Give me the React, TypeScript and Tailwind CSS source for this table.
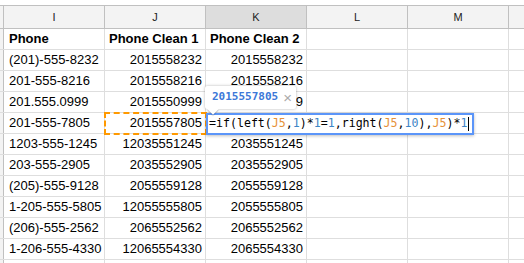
const colI = ["Phone", "(201)-555-8232", "201-555-8216", "201.555.0999", "201-555-7805", "1203-555-1245", "203-555-2905", "(205)-555-9128", "1-205-555-5805", "(206)-555-2562", "1-206-555-4330", ""];
const colJ = ["Phone Clean 1", "2015558232", "2015558216", "2015550999", "2015557805", "12035551245", "2035552905", "2055559128", "12055555805", "2065552562", "12065554330", ""];
// K5 sits under the formula editor, so it is left blank
const colK = ["Phone Clean 2", "2015558232", "2015558216", "2015550999", "", "2035551245", "2035552905", "2055559128", "2055555805", "2065552562", "2065554330", ""];

const headers = ["I", "J", "K", "L", "M"];

function Formula() {
    const ref = "text-[#e69138]";
    const num = "text-[#3d85c6]";
    return (
        <span>
            =if(left(<span className={ref}>J5</span>,<span className={num}>1</span>)*<span className={num}>1</span>=
            <span className={num}>1</span>,right(<span className={ref}>J5</span>,<span className={num}>10</span>),
            <span className={ref}>J5</span>)*<span className={num}>1</span>
        </span>
    );
}

function App() {
    return (
        <div className="relative w-[524px] h-[263px] overflow-hidden bg-white text-black" style={{ fontFamily: '"Liberation Sans", Arial, sans-serif' }}>
            <div className="h-[5px]" />
            {/* column header */}
            <div className="flex h-[24px] border-y border-[#c0c0c0] bg-[#f3f3f3]">
                <div className="w-[4px] shrink-0 border-r border-[#c0c0c0]" />
                {headers.map((h) => (
                    <div
                        key={h}
                        className={
                            "w-[101px] shrink-0 flex items-center justify-center border-r border-[#c0c0c0] text-[11px] text-[#222] " +
                            (h === "K" ? "bg-[#dddddd]" : "")
                        }
                    >
                        {h}
                    </div>
                ))}
                <div className="flex-1" />
            </div>
            {colI.map((v, i) => (
                <div key={i} className="flex h-[21px] border-b border-[#dedede] text-[13px] leading-[20px]">
                    <div className="w-[4px] shrink-0 border-r border-[#c0c0c0] bg-[#f3f3f3]" />
                    <div className={"w-[101px] shrink-0 border-r border-[#dedede] pl-[5px] whitespace-nowrap " + (i === 0 ? "font-bold" : "")}>{v}</div>
                    <div className={"w-[101px] shrink-0 border-r border-[#dedede] whitespace-nowrap " + (i === 0 ? "font-bold pl-[4px]" : "text-right pr-[3px]")}>{colJ[i]}</div>
                    <div className={"w-[101px] shrink-0 border-r border-[#dedede] whitespace-nowrap " + (i === 0 ? "font-bold pl-[4px]" : "text-right pr-[3px]")}>{colK[i]}</div>
                    <div className="w-[101px] shrink-0 border-r border-[#dedede]" />
                    <div className="w-[101px] shrink-0 border-r border-[#dedede]" />
                    <div className="flex-1" />
                </div>
            ))}

            {/* copied cell marker */}
            <div className="absolute left-[104px] top-[112px] w-[103px] h-[23px] border-2 border-dashed border-[#ff9900]" />

            {/* formula editor */}
            <div
                className="absolute left-[206px] top-[113px] w-[268px] h-[22px] border-2 border-[#5b95f9] bg-white pl-[1px] flex items-center text-[11.6px] whitespace-nowrap shadow-[0_1px_3px_rgba(0,0,0,0.25)]"
                style={{ fontFamily: '"DejaVu Sans Mono", "Liberation Mono", monospace' }}
            >
                <Formula />
                <span className="ml-[1px] inline-block w-[1px] h-[14px] bg-black" />
            </div>

            {/* tooltip */}
            <div className="absolute left-[205px] top-[86px] w-[91px] h-[23px] bg-white rounded-[2px] shadow-[0_0_3px_rgba(0,0,0,0.3)] flex items-center pl-[7px] gap-[5px]">
                <span className="text-[11px] font-bold text-[#3c78d8]" style={{ fontFamily: '"DejaVu Sans Mono", monospace' }}>
                    2015557805
                </span>
                <span className="text-[15px] leading-none text-[#aaa]">×</span>
                <div className="absolute left-[4px] -bottom-[4px] w-[8px] h-[8px] bg-white rotate-45 shadow-[1px_1px_1px_rgba(0,0,0,0.2)]" />
            </div>
        </div>
    );
}

export default App;
